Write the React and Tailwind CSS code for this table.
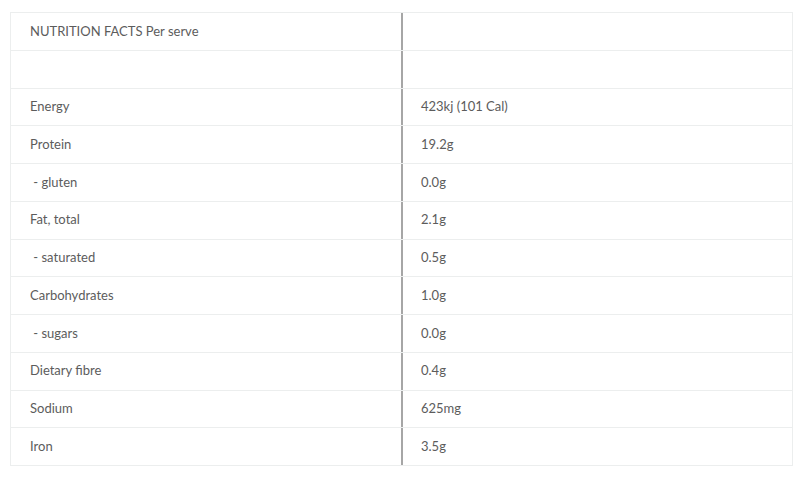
import React from "react";

const rows = [
  ["NUTRITION FACTS Per serve", ""],
  ["", ""],
  ["Energy", "423kj (101 Cal)"],
  ["Protein", "19.2g"],
  ["\u00a0- gluten", "0.0g"],
  ["Fat, total", "2.1g"],
  ["\u00a0- saturated", "0.5g"],
  ["Carbohydrates", "1.0g"],
  ["\u00a0- sugars", "0.0g"],
  ["Dietary fibre", "0.4g"],
  ["Sodium", "625mg"],
  ["Iron", "3.5g"],
];

export default function App() {
  return (
    <div className="w-[800px] h-[481px] bg-white pt-[12px] pl-[10px]" style={{ fontFamily: "Lato, 'Open Sans', sans-serif" }}>
      <div className="w-[783px] border border-[#eceeee] flex flex-col text-[13px] text-[#5c5c5c]">
        {rows.map(([a, b], i) => (
          <div
            key={i}
            className={
              i === 0
                ? "flex h-[36.75px]"
                : "flex h-[37.75px] border-t border-[#eceeee]"
            }
          >
            <div className="w-[392px] shrink-0 border-r-2 border-[#a6a6a6] flex items-center pl-[19px] whitespace-pre">
              {a}
            </div>
            <div className="flex-1 flex items-center pl-[18px]">{b}</div>
          </div>
        ))}
      </div>
    </div>
  );
}
